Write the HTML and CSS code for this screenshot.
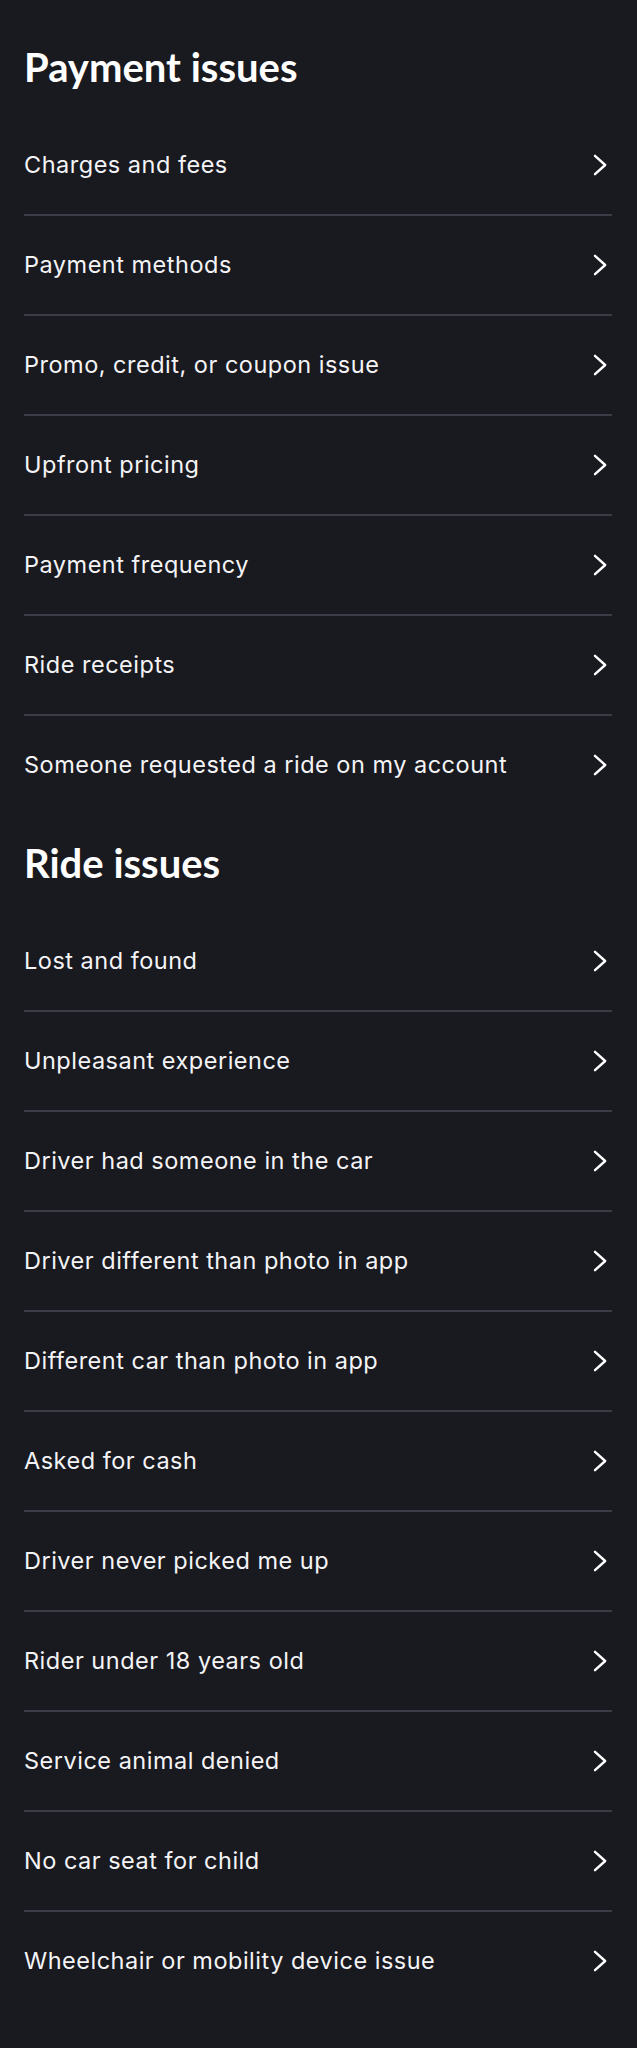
FILE: index.html
```html
<!DOCTYPE html>
<html lang="en">
<head>
<meta charset="utf-8">
<title>Help</title>
<link rel="stylesheet" href="styles.css">
</head>
<body>
<main class="page">
  <section class="section">
    <h2 class="section-title">Payment issues</h2>
    <ul class="list">
      <li class="row"><span class="label">Charges and fees</span><svg class="chev" viewBox="0 0 24 24"><path d="M7 2.8 L17.2 12 L7 21.2"/></svg></li>
      <li class="row"><span class="label">Payment methods</span><svg class="chev" viewBox="0 0 24 24"><path d="M7 2.8 L17.2 12 L7 21.2"/></svg></li>
      <li class="row"><span class="label">Promo, credit, or coupon issue</span><svg class="chev" viewBox="0 0 24 24"><path d="M7 2.8 L17.2 12 L7 21.2"/></svg></li>
      <li class="row"><span class="label">Upfront pricing</span><svg class="chev" viewBox="0 0 24 24"><path d="M7 2.8 L17.2 12 L7 21.2"/></svg></li>
      <li class="row"><span class="label">Payment frequency</span><svg class="chev" viewBox="0 0 24 24"><path d="M7 2.8 L17.2 12 L7 21.2"/></svg></li>
      <li class="row"><span class="label">Ride receipts</span><svg class="chev" viewBox="0 0 24 24"><path d="M7 2.8 L17.2 12 L7 21.2"/></svg></li>
      <li class="row"><span class="label">Someone requested a ride on my account</span><svg class="chev" viewBox="0 0 24 24"><path d="M7 2.8 L17.2 12 L7 21.2"/></svg></li>
    </ul>
  </section>
  <section class="section">
    <h2 class="section-title">Ride issues</h2>
    <ul class="list">
      <li class="row"><span class="label">Lost and found</span><svg class="chev" viewBox="0 0 24 24"><path d="M7 2.8 L17.2 12 L7 21.2"/></svg></li>
      <li class="row"><span class="label">Unpleasant experience</span><svg class="chev" viewBox="0 0 24 24"><path d="M7 2.8 L17.2 12 L7 21.2"/></svg></li>
      <li class="row"><span class="label">Driver had someone in the car</span><svg class="chev" viewBox="0 0 24 24"><path d="M7 2.8 L17.2 12 L7 21.2"/></svg></li>
      <li class="row"><span class="label">Driver different than photo in app</span><svg class="chev" viewBox="0 0 24 24"><path d="M7 2.8 L17.2 12 L7 21.2"/></svg></li>
      <li class="row"><span class="label">Different car than photo in app</span><svg class="chev" viewBox="0 0 24 24"><path d="M7 2.8 L17.2 12 L7 21.2"/></svg></li>
      <li class="row"><span class="label">Asked for cash</span><svg class="chev" viewBox="0 0 24 24"><path d="M7 2.8 L17.2 12 L7 21.2"/></svg></li>
      <li class="row"><span class="label">Driver never picked me up</span><svg class="chev" viewBox="0 0 24 24"><path d="M7 2.8 L17.2 12 L7 21.2"/></svg></li>
      <li class="row"><span class="label">Rider under 18 years old</span><svg class="chev" viewBox="0 0 24 24"><path d="M7 2.8 L17.2 12 L7 21.2"/></svg></li>
      <li class="row"><span class="label">Service animal denied</span><svg class="chev" viewBox="0 0 24 24"><path d="M7 2.8 L17.2 12 L7 21.2"/></svg></li>
      <li class="row"><span class="label">No car seat for child</span><svg class="chev" viewBox="0 0 24 24"><path d="M7 2.8 L17.2 12 L7 21.2"/></svg></li>
      <li class="row"><span class="label">Wheelchair or mobility device issue</span><svg class="chev" viewBox="0 0 24 24"><path d="M7 2.8 L17.2 12 L7 21.2"/></svg></li>
    </ul>
  </section>
</main>
</body>
</html>
```

FILE: styles.css
```css
html, body {
  margin: 0;
  padding: 0;
  background: #191920;
}
body {
  font-family: "Inter", "Lato", sans-serif;
  color: #f4f4f6;
  min-height: 2048px;
}
.page {
  padding: 44px 25px 60px 24px;
}
.section-title {
  margin: 0;
  font-family: "Lato", sans-serif;
  font-weight: 700;
  font-size: 40px;
  line-height: 46px;
  height: 46px;
  padding-bottom: 26px;
  color: #ffffff;
  letter-spacing: 0;
}
.section + .section {
  margin-top: 26px;
}
.list {
  list-style: none;
  margin: 0;
  padding: 0;
}
.row {
  display: flex;
  align-items: center;
  justify-content: space-between;
  height: 98px;
  border-bottom: 2px solid #3c3c46;
}
.row:last-child {
  border-bottom: none;
}
.label {
  font-family: "Inter", sans-serif;
  font-size: 23.5px;
  line-height: 30px;
  letter-spacing: 0.5px;
  color: #f4f4f6;
}
.chev {
  width: 24px;
  height: 24px;
  flex: none;
  fill: none;
  stroke: #ffffff;
  stroke-width: 2.4;
  stroke-linecap: round;
  stroke-linejoin: round;
}
```
